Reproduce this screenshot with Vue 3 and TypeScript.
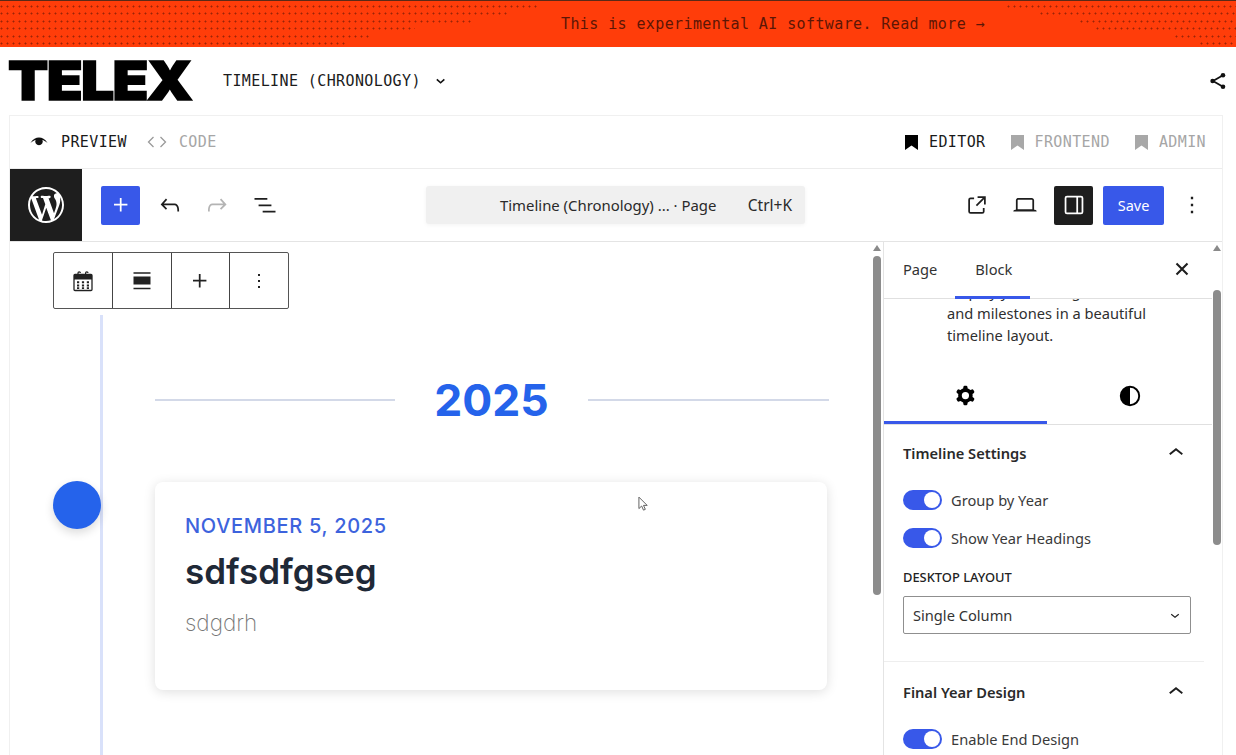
<script setup lang="ts">
const leftRows = [537, 510, 472, 415, 372, 348]
const rightRows = [229, 196, 156, 140, 61, 36]
const wp = 'M20 10c0-5.51-4.49-10-10-10C4.48 0 0 4.49 0 10c0 5.52 4.48 10 10 10 5.51 0 10-4.48 10-10zM7.78 15.37L4.37 6.22c.55-.02 1.17-.08 1.17-.08.5-.06.44-1.13-.06-1.11 0 0-1.45.11-2.37.11-.18 0-.37 0-.58-.01C4.12 2.69 6.87 1.11 10 1.11c2.33 0 4.45.87 6.05 2.34-.68-.11-1.65.39-1.65 1.58 0 .74.45 1.36.9 2.1.35.61.55 1.36.55 2.46 0 1.49-1.4 5-1.4 5l-3.03-8.37c.54-.02.82-.17.82-.17.5-.05.44-1.25-.06-1.22 0 0-1.44.12-2.38.12-.87 0-2.33-.12-2.33-.12-.5-.03-.56 1.2-.06 1.22l.92.08 1.26 3.41zM17.41 10c.24-.64.74-1.87.43-4.25.7 1.29 1.05 2.71 1.05 4.25 0 3.29-1.73 6.24-4.4 7.78.97-2.59 1.94-5.2 2.92-7.78zM6.1 18.09C3.12 16.65 1.11 13.53 1.11 10c0-1.3.23-2.48.72-3.59C3.25 10.3 4.67 14.2 6.1 18.09zm4.03-6.63l2.58 6.98c-.86.29-1.76.45-2.71.45-.79 0-1.57-.11-2.29-.33.81-2.38 1.62-4.74 2.42-7.1z'
const cog = 'M10.289 4.836A1 1 0 0 1 11.275 4h1.306a1 1 0 0 1 .987.836l.244 1.466c.787.26 1.503.679 2.108 1.218l1.393-.522a1 1 0 0 1 1.216.437l.653 1.13a1 1 0 0 1-.23 1.273l-1.148.944a6.025 6.025 0 0 1 0 2.435l1.149.946a1 1 0 0 1 .23 1.272l-.653 1.13a1 1 0 0 1-1.216.437l-1.394-.522c-.605.54-1.32.958-2.108 1.218l-.244 1.466a1 1 0 0 1-.987.836h-1.306a1 1 0 0 1-.986-.836l-.244-1.466a5.995 5.995 0 0 1-2.108-1.218l-1.394.522a1 1 0 0 1-1.217-.436l-.653-1.131a1 1 0 0 1 .23-1.272l1.149-.946a6.026 6.026 0 0 1 0-2.435l-1.148-.944a1 1 0 0 1-.23-1.272l.653-1.131a1 1 0 0 1 1.217-.437l1.393.522a5.994 5.994 0 0 1 2.108-1.218l.244-1.466ZM14.929 12a3 3 0 1 1-6 0 3 3 0 0 1 6 0Z'
const chevUp = 'M6.5 12.4L12 8l5.5 4.4-.9 1.2L12 10l-4.5 3.6-1-1.2z'
const chevDown = 'M17.5 11.6L12 16l-5.5-4.4.9-1.2L12 14l4.5-3.6 1 1.2z'
const plus = 'M11 12.5V17.5H12.5V12.5H17.5V11H12.5V6H11V11H6V12.5H11Z'
const more = 'M13 19h-2v-2h2v2zm0-6h-2v-2h2v2zm0-6h-2V5h2v2z'
const bookmark = 'M0 0h13v15l-6.5-4.500L0 15z'
</script>

<template>
  <div class="page">
    <div class="banner">
      <div class="dots left">
        <i v-for="w in leftRows" :key="w" :style="{ width: w + 'px' }"></i>
      </div>
      <span class="banner-text">This is experimental AI software. Read more →</span>
      <div class="dots right">
        <i v-for="(w, n) in rightRows" :key="n" :style="{ width: w + 'px' }"></i>
      </div>
    </div>

    <header class="head">
      <span class="logo">TELEX</span>
      <span class="mono project">TIMELINE (CHRONOLOGY)</span>
      <svg class="proj-chev" viewBox="0 0 12 8" width="10" height="7"><path d="M1 1.5l4.5 4 4.5-4" fill="none" stroke="#111" stroke-width="2"/></svg>
      <svg class="share" viewBox="0 0 18 18" width="18" height="18">
        <path d="M14 3.2L4 9l10 5.8" fill="none" stroke="#111" stroke-width="1.8"/>
        <circle cx="14" cy="3.2" r="2.3" fill="#111"/><circle cx="3.6" cy="9" r="2.3" fill="#111"/><circle cx="14" cy="14.8" r="2.3" fill="#111"/>
      </svg>
    </header>

    <div class="frame">
      <div class="modes">
        <div class="mode on">
          <svg viewBox="0 0 20 14" width="18" height="13"><path d="M0.5 7.5C3.5 3 6.5 1.5 10 1.5s6.500 1.500 9.500 6c-2.500-2-4.500-3-5.700-3.300a4.200 4.200 0 1 1-7.600 0C5 4.500 3 5.500 .5 7.500z" fill="#111"/></svg>
          <span class="mono">PREVIEW</span>
        </div>
        <div class="mode off code">
          <svg viewBox="0 0 20 14" width="20" height="14"><path d="M6.500 2L1.500 7l5 5M13.500 2l5 5-5 5" fill="none" stroke="#9a9a9a" stroke-width="1.300"/></svg>
          <span class="mono">CODE</span>
        </div>
        <div class="spacer"></div>
        <div class="mode on view">
          <svg viewBox="0 0 13 15" width="13" height="15"><path :d="bookmark" fill="#000"/></svg>
          <span class="mono">EDITOR</span>
        </div>
        <div class="mode off view">
          <svg viewBox="0 0 13 15" width="13" height="15"><path :d="bookmark" fill="#a8a8a8"/></svg>
          <span class="mono">FRONTEND</span>
        </div>
        <div class="mode off view">
          <svg viewBox="0 0 13 15" width="13" height="15"><path :d="bookmark" fill="#a8a8a8"/></svg>
          <span class="mono">ADMIN</span>
        </div>
      </div>

      <div class="toolbar">
        <div class="wp"><svg viewBox="0 0 20 20" width="36" height="36"><path :d="wp" fill="#fff"/></svg></div>
        <button class="sq blue"><svg viewBox="0 0 24 24" width="28" height="28"><path :d="plus" fill="#fff"/></svg></button>
        <svg class="tool undo" viewBox="0 0 24 24" width="28" height="28"><path d="M18.300 11.700c-.6-.6-1.400-.9-2.300-.9H6.700l2.900-3.300-1.100-1-4.500 5L8.500 16l1-1-2.700-2.700H16c.5 0 .9.2 1.300.5 1 1 1 3.400 1 4.500v.3h1.500v-.2c0-1.500 0-4.300-1.500-5.700z" fill="#1e1e1e"/></svg>
        <svg class="tool redo" viewBox="0 0 24 24" width="28" height="28"><path d="M15.600 6.500l-1.100 1 2.900 3.300H8c-.9 0-1.700.3-2.300.9-1.400 1.500-1.400 4.200-1.400 5.600v.2h1.500v-.3c0-1.100 0-3.500 1-4.500.3-.3.7-.5 1.300-.5h9.200L14.500 15l1.100 1.100 4.600-4.600-4.600-5z" fill="#b4b4b4"/></svg>
        <svg class="tool list" viewBox="0 0 24 24" width="28" height="28"><path d="M3 6h11v1.500H3V6zm3.500 5.500h11V13h-11v-1.500zM21 17H10v1.500h11V17z" fill="#1e1e1e"/></svg>
        <div class="palette">
          <span class="pal-title">Timeline (Chronology) ... · Page</span>
          <span class="pal-key">Ctrl+K</span>
        </div>
        <svg class="tool ext" viewBox="0 0 24 24" width="28" height="28"><path d="M19.500 4.500h-7V6h4.440l-5.970 5.970 1.060 1.060L18 7.060v4.440h1.500v-7Zm-13 1a2 2 0 0 0-2 2v10a2 2 0 0 0 2 2h10a2 2 0 0 0 2-2v-3H17v3a.5.5 0 0 1-.5.5h-10a.5.5 0 0 1-.5-.5v-10a.5.5 0 0 1 .5-.5h3V5.500h-3Z" fill="#1e1e1e"/></svg>
        <svg class="tool lap" viewBox="0 0 24 24" width="28" height="28"><path d="M20.500 16h-.7V8c0-1.100-.9-2-2-2H6.200c-1.100 0-2 .9-2 2v8h-.7c-.8 0-1.500.7-1.500 1.500h20c0-.8-.7-1.500-1.500-1.500zM5.700 8c0-.3.2-.5.5-.5h11.600c.3 0 .5.2.5.5v7.600H5.700V8z" fill="#1e1e1e"/></svg>
        <button class="sq dark"><svg viewBox="0 0 24 24" width="28" height="28"><path d="M18 4H6a2 2 0 0 0-2 2v12a2 2 0 0 0 2 2h12a2 2 0 0 0 2-2V6a2 2 0 0 0-2-2zM5.500 18V6c0-.3.2-.5.5-.5h8v13H6c-.3 0-.5-.2-.5-.5zm13 0c0 .3-.2.5-.5.5h-2.500v-13H18c.3 0 .5.200.5.5v12z" fill="#fff"/></svg></button>
        <button class="save">Save</button>
        <svg class="tool dots3" viewBox="0 0 24 24" width="28" height="28"><path :d="more" fill="#1e1e1e"/></svg>
      </div>

      <div class="work">
        <main class="canvas">
          <div class="block-tools">
            <div class="bt">
              <svg viewBox="0 0 24 24" width="24" height="24">
                <path d="M3 6.500a1 1 0 0 1 1-1h16a1 1 0 0 1 1 1v14a1 1 0 0 1-1 1H4a1 1 0 0 1-1-1z" fill="#fff" stroke="#222" stroke-width="1.300"/>
                <path d="M3 6h18v4.500H3z" fill="#222"/>
                <path d="M7 7V4a1.200 1.200 0 0 1 2.400 0M14.600 7V4A1.200 1.200 0 0 1 17 4" fill="none" stroke="#222" stroke-width="1.200"/>
                <path d="M6 12.300h2.200v2H6zm4.900 0h2.200v2h-2.200zm4.900 0H18v2h-2.200zM6 15.500h2.200v2H6zm4.900 0h2.200v2h-2.200zm4.900 0H18v2h-2.200zM6 18.300h2.200v1.800H6zm4.900 0h2.200v1.800h-2.200zm4.900 0H18v1.800h-2.200z" fill="#222"/>
              </svg>
            </div>
            <div class="bt">
              <svg viewBox="0 0 24 24" width="24" height="24"><path d="M3.500 3.300h17v1.500h-17zM3.500 7.500h17v8h-17zM3.500 18.700h17v1.500h-17z" fill="#222"/></svg>
            </div>
            <div class="bt"><svg viewBox="0 0 24 24" width="28" height="28"><path :d="plus" fill="#222"/></svg></div>
            <div class="bt"><svg viewBox="0 0 24 24" width="24" height="24"><path :d="more" fill="#222"/></svg></div>
          </div>

          <div class="timeline">
            <div class="axis"></div>
            <div class="tl-col">
              <div class="year-row">
                <span class="rule first-rule"></span>
                <span class="year">2025</span>
                <span class="rule"></span>
              </div>
              <article class="card">
                <span class="marker"></span>
                <div class="date">NOVEMBER 5, 2025</div>
                <h2 class="title">sdfsdfgseg</h2>
                <p class="desc">sdgdrh</p>
                <svg class="cursor" viewBox="0 0 12 17" width="11" height="16"><path d="M1 1v12.500l3-2.800 2 4.500 2-.9-2-4.300h4z" fill="#fff" stroke="#555" stroke-width="1"/></svg>
              </article>
            </div>
          </div>

          <div class="sb sb-canvas"><b class="arrow"></b><b class="thumb"></b></div>
        </main>

        <aside class="side">
          <div class="side-tabs">
            <span class="tab">Page</span>
            <span class="tab active">Block</span>
            <svg class="side-close" viewBox="0 0 24 24" width="22" height="22"><path d="M6 6l12 12M18 6L6 18" fill="none" stroke="#1e1e1e" stroke-width="2.300"/></svg>
          </div>
          <div class="side-body">
            <p class="intro">Display your timing<br>and milestones in a beautiful<br>timeline layout.</p>
            <div class="sub-tabs">
              <div class="sub on"><svg viewBox="0 0 24 24" width="29" height="29"><path :d="cog" fill="#000" fill-rule="evenodd"/></svg></div>
              <div class="sub"><svg viewBox="0 0 24 24" width="26" height="26"><circle cx="12" cy="12" r="8.500" fill="#fff" stroke="#000" stroke-width="1.800"/><path d="M12 3.500a8.500 8.500 0 0 0 0 17z" fill="#000"/></svg></div>
            </div>
            <section class="group first">
              <div class="group-head">
                <span>Timeline Settings</span>
                <svg viewBox="0 0 24 24" width="30" height="30"><path :d="chevUp" fill="#1e1e1e"/></svg>
              </div>
              <label class="toggle-row"><span class="toggle"><i></i></span>Group by Year</label>
              <label class="toggle-row"><span class="toggle"><i></i></span>Show Year Headings</label>
              <div class="caps">DESKTOP LAYOUT</div>
              <div class="select">
                <span>Single Column</span>
                <svg viewBox="0 0 24 24" width="18" height="18"><path :d="chevDown" fill="#1e1e1e"/></svg>
              </div>
            </section>
            <section class="group">
              <div class="group-head">
                <span>Final Year Design</span>
                <svg viewBox="0 0 24 24" width="30" height="30"><path :d="chevUp" fill="#1e1e1e"/></svg>
              </div>
              <label class="toggle-row"><span class="toggle"><i></i></span>Enable End Design</label>
            </section>
          </div>
          <div class="sb sb-side"><b class="arrow"></b><b class="thumb"></b></div>
        </aside>
      </div>
    </div>
  </div>
</template>

<style>
html, body { margin: 0; background: #fff; overflow: hidden; }
</style>

<style scoped>
.page { width: 1236px; height: 755px; overflow: hidden; display: flex; flex-direction: column; font-family: "Noto Sans", sans-serif; color: #1e1e1e; }
.mono { font-family: "DejaVu Sans Mono", monospace; font-size: 15px; letter-spacing: .39px; line-height: 20px; }

.banner { height: 47px; flex: none; box-sizing: border-box; border-top: 1px solid #5a2a18; background: #ff3d0a; position: relative; display: flex; align-items: center; justify-content: center; padding-left: 310px; }
.banner-text { font-family: "DejaVu Sans Mono", monospace; font-size: 15px; letter-spacing: .39px; color: #5c1606; }
.dots { position: absolute; top: 4px; left: 0; right: 0; display: flex; flex-direction: column; gap: 4.400px; }
.dots i { display: block; height: 3px; background-image: radial-gradient(circle at 1.500px 1.500px, rgba(90, 20, 5, .6) .8px, transparent 1.200px); background-size: 6px 3px; }
.dots.left { align-items: flex-start; }
.dots.right { align-items: flex-end; }

.head { height: 68px; flex: none; display: flex; align-items: center; position: relative; }
.logo { font-family: Inter, sans-serif; font-weight: 900; font-size: 53px; line-height: 1; letter-spacing: -1.500px; color: #000; margin-left: 8px; width: 215px; -webkit-text-stroke: 1.500px #000; transform: scaleX(1.108); transform-origin: left center; }
.project { color: #1c1c1c; }
.proj-chev { margin-left: 15px; }
.share { margin-left: auto; margin-right: 9px; }

.frame { flex: 1; min-height: 0; margin: 0 13px 0 9px; border: 1px solid #f0f0f0; border-bottom: 0; display: flex; flex-direction: column; }
.modes { height: 52px; flex: none; display: flex; align-items: center; padding: 0 16px 0 20px; border-bottom: 1px solid #ececec; }
.mode { display: flex; align-items: center; gap: 13px; }
.mode.on { color: #1a1a1a; }
.mode.off { color: #a6a6a6; }
.mode.code { margin-left: 20px; gap: 12px; }
.mode.view { gap: 11px; margin-left: 25px; }
.spacer { flex: 1; }

.toolbar { flex: none; display: flex; align-items: center; border-bottom: 1px solid #e4e4e4; box-sizing: border-box; height: 73px; }
.wp { width: 72px; height: 72px; background: #1e1e1e; display: flex; align-items: center; justify-content: center; flex: none; }
.sq { width: 39px; height: 39px; border: 0; padding: 0; border-radius: 2px; display: flex; align-items: center; justify-content: center; flex: none; }
.blue { background: #3858e9; margin-left: 19px; }
.dark { background: #1e1e1e; margin-left: 15px; }
.tool { flex: none; }
.undo { margin-left: 16px; }
.redo { margin-left: 19px; }
.list { margin-left: 20px; }
.palette { width: 379px; height: 38px; flex: none; margin-left: 147px; background: #f0f0f0; border-radius: 3px; box-shadow: 0 1px 4px rgba(0, 0, 0, .05); display: flex; align-items: center; box-sizing: border-box; padding-left: 74px; font-size: 14.900px; color: #2a2a2a; }
.pal-key { margin-left: auto; margin-right: 13px; font-size: 15.500px; }
.ext { margin-left: 158px; }
.lap { margin-left: 20px; }
.save { width: 61px; height: 39px; border: 0; border-radius: 2px; background: #3858e9; color: #fff; margin-left: 10px; font: 14.500px "Noto Sans", sans-serif; flex: none; padding: 0; }
.dots3 { margin-left: 14px; }

.work { flex: 1; min-height: 0; display: flex; }
.canvas { width: 873px; flex: none; position: relative; overflow: hidden; box-sizing: border-box; }
.sb { position: absolute; top: 0; bottom: 0; width: 8px; }
.arrow { position: absolute; left: 0; top: 3px; width: 0; height: 0; border: 4px solid transparent; border-top: 0; border-bottom: 6px solid #8a8a8a; }
.thumb { position: absolute; left: 0; width: 8px; background: #8c8c8c; border-radius: 4px; }
.sb-canvas { right: 2px; }
.sb-canvas .thumb { top: 14px; height: 339px; }
.sb-side { right: 1px; }
.sb-side .thumb { top: 48px; height: 255px; }

.block-tools { position: absolute; left: 43px; top: 10px; width: 236px; height: 57px; box-sizing: border-box; background: #fff; border: 1px solid #555; border-radius: 2px; display: flex; }
.bt { flex: 1; display: flex; align-items: center; justify-content: center; border-right: 1px solid #444; }
.bt:last-child { border-right: 0; }

.timeline { display: flex; padding: 73px 54px 0 90px; height: 100%; box-sizing: border-box; }
.axis { width: 3px; background: #d9e1fa; flex: none; margin-bottom: -40px; }
.tl-col { flex: 1; padding-left: 52px; min-width: 0; }
.year-row { display: flex; align-items: center; height: 54px; margin-top: 58px; }
.rule { flex: 1; height: 2px; background: #d3d9e8; }
.first-rule { flex: none; width: 240px; }
.year { width: 193px; text-align: center; font-family: Inter, sans-serif; font-weight: 700; font-size: 44.500px; line-height: 54px; color: #2563eb; }
.card { position: relative; height: 208px; margin: 55px 2px 0 0; box-sizing: border-box; padding: 30px 30px; background: #fff; border-radius: 8px; box-shadow: 0 2px 12px rgba(0, 0, 0, .13); font-family: Inter, sans-serif; }
.marker { position: absolute; left: -102px; top: -1px; width: 48px; height: 48px; border-radius: 50%; background: #2563eb; box-shadow: 0 4px 10px rgba(0, 0, 0, .14); }
.date { font-size: 20px; line-height: 28px; font-weight: 500; letter-spacing: .7px; color: #3d63dd; }
.title { margin: 7px 0 0; font-size: 35px; line-height: 48px; font-weight: 600; color: #1f2937; }
.desc { margin: 13px 0 0; font-size: 22.500px; line-height: 30px; font-weight: 200; color: #777; }
.cursor { position: absolute; left: 483px; top: 14px; }

.side { flex: 1; min-width: 0; position: relative; border-left: 1px solid #e4e4e4; overflow: hidden; display: flex; flex-direction: column; }
.side-tabs { height: 57px; flex: none; box-sizing: border-box; border-bottom: 1px solid #e0e0e0; width: 328px; display: flex; align-items: center; padding-left: 19px; position: relative; font-size: 14.650px; padding-bottom: 2px; }
.tab { color: #333; }
.tab.active { margin-left: 38px; }
.tab.active::after { content: ""; position: absolute; left: 71px; width: 75px; bottom: -1px; height: 3px; background: #3858e9; }
.side-close { margin-left: auto; margin-right: 19px; }
.side-body { width: 328px; flex: 1; min-height: 0; overflow: hidden; }
.intro { margin: -19px 0 13px 63px; font-size: 14.650px; line-height: 22px; color: #2f2f2f; }
.sub-tabs { display: flex; height: 66px; border-bottom: 1px solid #e0e0e0; box-sizing: border-box; }
.sub { flex: 1; display: flex; align-items: center; justify-content: center; padding-top: 8px; }
.sub.on { box-shadow: inset 0 -3px 0 #3858e9; flex: none; width: 163px; }
.group { padding: 0 20px 0 19px; }
.group.first { border-bottom: 1px solid #eee; height: 237px; box-sizing: border-box; margin-right: 8px; padding-right: 12px; }
.group-head { height: 55px; margin-bottom: 10px; display: flex; align-items: center; justify-content: space-between; font-size: 14.650px; font-weight: 600; color: #2a2a2a; padding-right: 1px; }
.group + .group .group-head { height: 60px; margin-bottom: 7px; }
.toggle-row { display: flex; align-items: center; gap: 9px; height: 20px; margin: 0 0 18px; font-size: 14.650px; color: #3a3a3a; }
.toggle { width: 39px; height: 20px; border-radius: 10px; background: #3858e9; position: relative; flex: none; }
.toggle i { position: absolute; right: 2px; top: 2px; width: 16px; height: 16px; border-radius: 50%; background: #fff; }
.caps { font-size: 12.900px; line-height: 16px; font-weight: 500; color: #222; margin-top: 21px; }
.select { margin-top: 11px; width: 288px; height: 38px; box-sizing: border-box; border: 1px solid #8f8f8f; border-radius: 2px; display: flex; align-items: center; justify-content: space-between; padding: 0 6px 0 9px; font-size: 14.650px; color: #333; }
</style>
